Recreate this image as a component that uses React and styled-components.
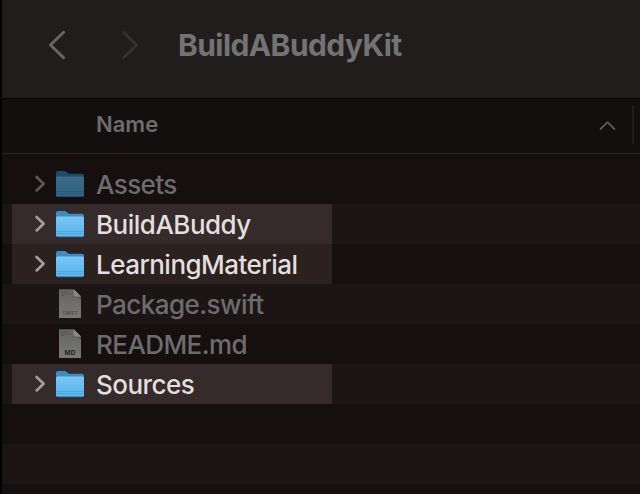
import React from 'react';
import styled, { createGlobalStyle } from 'styled-components';

const GlobalStyle = createGlobalStyle`
  * { box-sizing: border-box; }
  html, body { margin: 0; background: #000; overflow: hidden; }
  body { font-family: Inter, "Liberation Sans", sans-serif; }
`;

const Window = styled.main`
  width: 640px;
  height: 494px;
  padding-left: 2px;
  display: flex;
  flex-direction: column;
  overflow: hidden;
  background: #000;
`;

const Toolbar = styled.header`
  height: 98px;
  flex: none;
  display: flex;
  align-items: flex-start;
  background: #211d1c;
  padding: 30px 0 0 44px;
`;

const NavButton = styled.button`
  display: flex;
  width: 22px;
  height: 30px;
  margin-right: ${(p) => p.$gap}px;
  padding: 0;
  border: 0;
  background: none;
  color: ${(p) => p.$color};
`;

const Title = styled.h1`
  margin: 0;
  font-size: 30px;
  line-height: 30px;
  font-weight: 700;
  letter-spacing: ${(p) => p.$tracking}px;
  color: #737373;
  white-space: nowrap;
`;

const ColumnHeader = styled.div`
  height: 56px;
  flex: none;
  display: flex;
  align-items: center;
  border-top: 1px solid #000;
  border-bottom: 1px solid #2a2625;
  background: #130f0e;
  padding: 0 6px 0 94px;
`;

const ColumnName = styled.span`
  flex: 1;
  font-size: 22px;
  line-height: 28px;
  font-weight: 600;
  color: #6d6c6c;
  margin-top: -5px;
`;

const Divider = styled.span`
  width: 2px;
  height: 38px;
  margin: -2px 0 0 15px;
  background: #211d1c;
`;

const List = styled.div`
  flex: 1;
  padding-top: 10px;
  background: #150f0f;
  overflow: hidden;
`;

const Row = styled.div`
  height: 40px;
  display: flex;
  padding-left: 10px;
  background: ${(p) => (p.$striped ? '#1b1615' : '#150f0f')};
`;

const Item = styled.div`
  width: 320px;
  height: 40px;
  display: flex;
  align-items: center;
  padding-left: 20px;
  background: ${(p) => p.$fill || 'transparent'};
`;

const Disclosure = styled.span`
  width: 22px;
  height: 40px;
  flex: none;
  color: ${(p) => (p.$lit ? '#a39e9d' : '#5c5958')};
`;

const IconSlot = styled.span`
  width: 42px;
  height: 40px;
  flex: none;
`;

const Label = styled.span`
  padding-top: 2px;
  font-size: 26px;
  line-height: 40px;
  font-weight: ${(p) => (p.$lit ? 500 : 450)};
  letter-spacing: ${(p) => p.$tracking}px;
  color: ${(p) => (p.$lit ? '#e2dfde' : '#6d6c6c')};
  white-space: nowrap;
`;

const Drawing = styled.svg`
  display: block;
`;

function Chevron({ width, height, d, stroke }) {
  return (
    <Drawing width={width} height={height} viewBox={`0 0 ${width} ${height}`} fill="none"
      stroke="currentColor" strokeWidth={stroke} strokeLinecap="round" strokeLinejoin="round">
      <path d={d} />
    </Drawing>
  );
}

function Folder({ lit, id }) {
  const c = lit
    ? { back: '#3c8dc4', top: '#77c6f5', bottom: '#58b4ea', line: '#3f9bd2', edge: '#8dd3fa', base: '#2f7fb4' }
    : { back: '#214a66', top: '#3a6a86', bottom: '#2f6486', line: '#24526f', edge: '#46748e', base: '#1c4159' };
  return (
    <Drawing width="42" height="40" viewBox="0 0 42 40">
      <defs>
        <linearGradient id={id} x1="0" y1="0" x2="0" y2="1">
          <stop offset="0" stopColor={c.top} />
          <stop offset="1" stopColor={c.bottom} />
        </linearGradient>
      </defs>
      <path d="M2 32V9q0-2 2-2h6.4q1.1 0 1.9.8l1.1 1q.9.9 2.2.9H28q2 0 2 2V32Z" fill={c.back} />
      <path d="M2 14.2q0-1.4 1.4-1.4h25.2q1.4 0 1.4 1.4V31.2q0 1.8-1.8 1.8H3.8q-1.8 0-1.8-1.8Z" fill={`url(#${id})`} />
      <path d="M3 13.1h26" stroke={c.edge} strokeWidth=".7" />
      <path d="M2 27.5h28M2 29.5h28" stroke={c.line} strokeWidth=".8" opacity=".6" />
      <path d="M3.2 32.7h25.6" stroke={c.base} strokeWidth=".8" />
    </Drawing>
  );
}

const TypeMark = styled.text`
  font-family: Inter, sans-serif;
  font-size: ${(p) => p.$size}px;
  font-weight: ${(p) => p.$weight};
  fill: ${(p) => p.$ink};
  text-anchor: middle;
`;

function Document({ mark, id }) {
  const md = mark === 'MD';
  return (
    <Drawing width="42" height="40" viewBox="0 0 42 40">
      <defs>
        <linearGradient id={id} x1="0" y1="0" x2="0" y2="1">
          <stop offset="0" stopColor="#646464" />
          <stop offset="1" stopColor="#7a7978" />
        </linearGradient>
      </defs>
      <path d="M5 5.2h14.8L27 12.5V34H5Z" fill={`url(#${id})`} />
      <path d="M19 5.2v6.9q0 1.2 1.2 1.2H27v2.4l-8-4.2Z" fill="#484746" opacity=".6" />
      <path d="M19.8 5.2 27 12.5h-5.8q-1.4 0-1.4-1.4Z" fill="#8a8988" />
      <path d="M7 7.8h7M7 9.8h11M7 11.5h3" stroke="#4f4e4d" strokeWidth=".6" />
      <TypeMark x="16" y={md ? 31 : 31.4} $size={md ? 6.6 : 4.7} $weight={600} $ink={md ? '#171717' : '#494847'}>{mark}</TypeMark>
    </Drawing>
  );
}

const entries = [
  { name: 'Assets', kind: 'folder', tracking: -0.6 },
  { name: 'BuildABuddy', kind: 'folder', fill: '#352b2a', tracking: -0.5 },
  { name: 'LearningMaterial', kind: 'folder', fill: '#2b211f', tracking: -0.53 },
  { name: 'Package.swift', kind: 'SWIFT', tracking: -0.55 },
  { name: 'README.md', kind: 'MD', tracking: -0.57 },
  { name: 'Sources', kind: 'folder', fill: '#352b2a', tracking: -0.55 },
  {}, {}, {},
];

export default function App() {
  return (
    <>
      <GlobalStyle />
      <Window>
        <Toolbar>
          <NavButton $gap={51} $color="#696665" aria-label="Back">
            <Chevron width={22} height={30} stroke={2.9} d="M17.6 2.2 4.4 15l13.2 12.6" />
          </NavButton>
          <NavButton $gap={37} $color="#353130" aria-label="Forward">
            <Chevron width={22} height={30} stroke={2.9} d="M4.6 2.2 17.6 15 4.6 27.6" />
          </NavButton>
          <Title $tracking={-0.58}>BuildABuddyKit</Title>
        </Toolbar>
        <ColumnHeader>
          <ColumnName>Name</ColumnName>
          <Disclosure>
            <Chevron width={22} height={40} stroke={1.8} d="M5.6 23 12.5 16.2 19.4 23" />
          </Disclosure>
          <Divider />
        </ColumnHeader>
        <List>
          {entries.map((e, i) => (
            <Row key={i} $striped={i % 2 === 1}>
              {e.name && (
                <Item $fill={e.fill}>
                  <Disclosure $lit={!!e.fill}>
                    {e.kind === 'folder' && <Chevron width={22} height={40} stroke={2.7} d="M4.6 13 11.6 19.7 4.6 26.4" />}
                  </Disclosure>
                  <IconSlot>
                    {e.kind === 'folder'
                      ? <Folder lit={!!e.fill} id={`icon${i}`} />
                      : <Document mark={e.kind} id={`icon${i}`} />}
                  </IconSlot>
                  <Label $lit={!!e.fill} $tracking={e.tracking}>{e.name}</Label>
                </Item>
              )}
            </Row>
          ))}
        </List>
      </Window>
    </>
  );
}
